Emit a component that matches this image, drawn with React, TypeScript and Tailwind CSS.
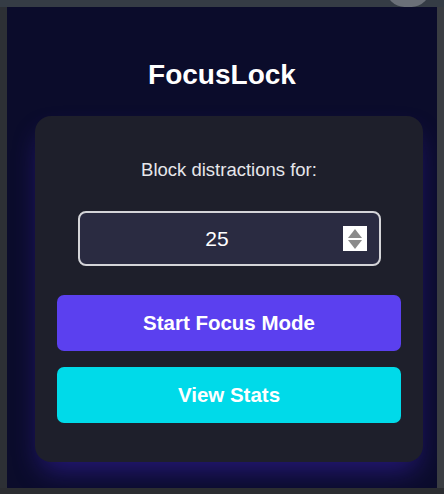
import React, { useState } from "react";

export default function App() {
  const [minutes, setMinutes] = useState(25);

  return (
    <div className="relative w-[444px] h-[494px] bg-[#26282c] flex flex-col overflow-hidden font-['Liberation_Sans',Arial,sans-serif]">
      {/* browser chrome behind the popup */}
      <div className="h-[7px] bg-[#353c45] shrink-0" />
      <div className="absolute right-[14px] top-[-30px] w-[44px] h-[37px] rounded-full bg-[#6b7078]" />

      <div className="flex flex-1">
        <div className="w-[7px] bg-[#2d3035] shrink-0" />

        {/* popup */}
        <div className="w-[430px] bg-[#0b0c2b] flex flex-col pt-[52px]">
          <h1 className="text-center text-white text-[28px] leading-[32px] font-bold">FocusLock</h1>

          <div className="ml-[28px] mr-[14px] mt-[25px] rounded-[16px] bg-[#1e1f2b] shadow-[0_14px_28px_-6px_rgba(70,40,220,0.45)] px-[22px] pt-[43px] pb-[39px] flex flex-col">
            <p className="text-center text-[#e6e6ea] text-[18.5px] leading-[22px]">Block distractions for:</p>

            <div className="mt-[30px] mx-auto w-[303px] h-[55px] rounded-[8px] border-2 border-[#d4d4d8] bg-[#2a2b41] flex items-center relative pr-[24px]">
              <span className="flex-1 text-center text-white text-[21px]">{minutes}</span>
              <div className="absolute right-[12px] top-[13px] w-[24px] h-[25px] bg-white flex flex-col items-center justify-center gap-[2px]">
                <button onClick={() => setMinutes(minutes + 1)} className="w-0 h-0 border-l-[7px] border-r-[7px] border-b-[9px] border-l-transparent border-r-transparent border-b-[#8a8a8a]" />
                <button onClick={() => setMinutes(Math.max(1, minutes - 1))} className="w-0 h-0 border-l-[7px] border-r-[7px] border-t-[9px] border-l-transparent border-r-transparent border-t-[#8a8a8a]" />
              </div>
            </div>

            <button className="mt-[29px] h-[56px] rounded-[7px] bg-[#5b40ef] text-white text-[20.5px] font-bold">
              Start Focus Mode
            </button>
            <button className="mt-[16px] h-[56px] rounded-[7px] bg-[#00dae9] text-white text-[20.5px] font-bold">
              View Stats
            </button>
          </div>
        </div>

        <div className="w-[7px] bg-[#3a3d42] shrink-0" />
      </div>

      <div className="h-[6px] bg-[#2b2d31] shrink-0" />
    </div>
  );
}
